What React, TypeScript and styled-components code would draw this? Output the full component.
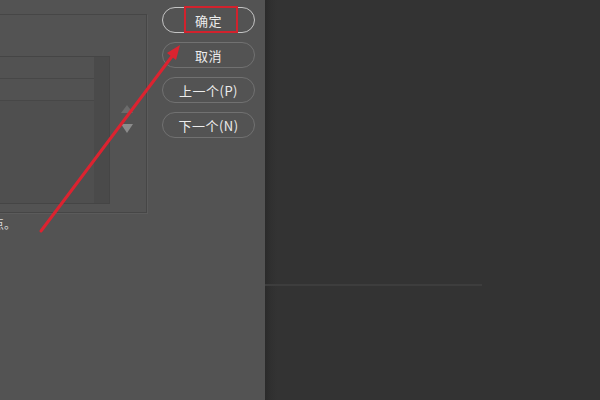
import React from "react";
import styled, { createGlobalStyle } from "styled-components";

const Global = createGlobalStyle`
  html, body { margin: 0; padding: 0; background: #333333; }
  body { font-family: "Noto Sans CJK SC", "Noto Sans", sans-serif; }
`;

const Screen = styled.div`
  display: flex;
  width: 600px;
  height: 400px;
  overflow: hidden;
`;

const Dialog = styled.div`
  position: relative;
  width: 265px;
  flex: none;
  height: 100%;
  background: #535353;
  overflow: hidden;
  display: flex;
  gap: 15px;
`;

const LeftColumn = styled.div`
  display: flex;
  flex-direction: column;
  margin-left: -20px;
  padding-top: 14px;
`;

const GroupBox = styled.div`
  width: 165px;
  border: 1px solid #464646;
  box-shadow: 1px 1px 0 #5b5b5b;
  display: flex;
  align-items: flex-start;
  padding-top: 41px;
  box-sizing: content-box;
  height: 156px;
`;

const List = styled.div`
  width: 128px;
  height: 146px;
  border: 1px solid #454545;
  border-left: none;
  background: #4f4f4f;
  display: flex;
`;

const Rows = styled.div`
  flex: 1;
  display: flex;
  flex-direction: column;
`;

const Row = styled.div`
  height: 21px;
  background: #525252;
  border-bottom: 1px solid #474747;
`;

const ScrollTrack = styled.div`
  width: 15px;
  background: #4a4a4a;
`;

const Spinner = styled.div`
  margin-left: 11px;
  margin-top: 49px;
  display: flex;
  flex-direction: column;
  gap: 11px;
`;

const Caption = styled.div`
  margin-top: 3px;
  margin-left: 12px;
  font-size: 12px;
  color: #d8d8d8;
  line-height: 16px;
  white-space: nowrap;
`;

const ButtonColumn = styled.div`
  display: flex;
  flex-direction: column;
  gap: 9px;
  padding-top: 7px;
`;

const PillButton = styled.div<{ $active?: boolean }>`
  width: 93px;
  height: 26px;
  box-sizing: border-box;
  border-radius: 13px;
  border: 1px solid ${(p) => (p.$active ? "#c4c4c4" : "#717171")};
  color: #ececec;
  font-size: 13px;
  display: flex;
  align-items: center;
  justify-content: center;
  letter-spacing: 0.5px;
`;

const Highlight = styled.div`
  position: absolute;
  left: 184px;
  top: 6px;
  width: 54px;
  height: 27px;
  box-sizing: border-box;
  border: 2px solid #d2222d;
`;

const ArrowLayer = styled.svg`
  position: absolute;
  left: 0;
  top: 0;
  pointer-events: none;
`;

const Workspace = styled.div`
  flex: 1;
  background: linear-gradient(to right, #2a2a2a 0px, #303030 6px, #333333 12px);
  padding-top: 284px;
`;

const Divider = styled.div`
  width: 217px;
  height: 2px;
  background: #3d3d3d;
`;

export default function App() {
  return (
    <>
      <Global />
      <Screen>
        <Dialog>
          <LeftColumn>
            <GroupBox>
              <List>
                <Rows>
                  <Row />
                  <Row />
                </Rows>
                <ScrollTrack />
              </List>
              <Spinner>
                <svg width="12" height="8" viewBox="0 0 12 8">
                  <polygon points="6,0 12,8 0,8" fill="#6b6b6b" />
                </svg>
                <svg width="12" height="9" viewBox="0 0 12 9">
                  <polygon points="0,0 12,0 6,9" fill="#8c8c8c" />
                </svg>
              </Spinner>
            </GroupBox>
            <Caption>点。</Caption>
          </LeftColumn>
          <ButtonColumn>
            <PillButton $active>确定</PillButton>
            <PillButton>取消</PillButton>
            <PillButton>上一个(P)</PillButton>
            <PillButton>下一个(N)</PillButton>
          </ButtonColumn>
          <Highlight />
          <ArrowLayer width="265" height="400" viewBox="0 0 265 400">
            <line x1="41" y1="231" x2="173" y2="55" stroke="#dc2330" strokeWidth="3" strokeLinecap="round" />
            <polygon points="180,45 176,60 167,53" fill="#dc2330" />
          </ArrowLayer>
        </Dialog>
        <Workspace>
          <Divider />
        </Workspace>
      </Screen>
    </>
  );
}
